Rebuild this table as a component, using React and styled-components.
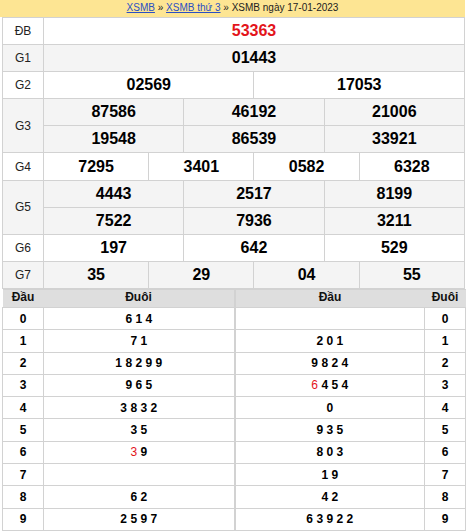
import React from "react"
import styled, { createGlobalStyle } from "styled-components"

const prizes = [
  { label: "ĐB", nums: ["53363"], special: true },
  { label: "G1", nums: ["01443"] },
  { label: "G2", nums: ["02569", "17053"] },
  { label: "G3", nums: ["87586", "46192", "21006", "19548", "86539", "33921"], perRow: 3 },
  { label: "G4", nums: ["7295", "3401", "0582", "6328"] },
  { label: "G5", nums: ["4443", "2517", "8199", "7522", "7936", "3211"], perRow: 3 },
  { label: "G6", nums: ["197", "642", "529"] },
  { label: "G7", nums: ["35", "29", "04", "55"] },
]

// each digit list may mark one entry as red with a leading "*"
const loto = [
  { head: ["6", "1", "4"], tail: [] },
  { head: ["7", "1"], tail: ["2", "0", "1"] },
  { head: ["1", "8", "2", "9", "9"], tail: ["9", "8", "2", "4"] },
  { head: ["9", "6", "5"], tail: ["*6", "4", "5", "4"] },
  { head: ["3", "8", "3", "2"], tail: ["0"] },
  { head: ["3", "5"], tail: ["9", "3", "5"] },
  { head: ["*3", "9"], tail: ["8", "0", "3"] },
  { head: [], tail: ["1", "9"] },
  { head: ["6", "2"], tail: ["4", "2"] },
  { head: ["2", "5", "9", "7"], tail: ["6", "3", "9", "2", "2"] },
]

const GlobalStyle = createGlobalStyle`
  body {
    margin: 0;
    background: #fff;
    font-family: "Liberation Sans", Arial, sans-serif;
  }
`

const Wrapper = styled.div`
  width: 465px;
`

const Breadcrumb = styled.div`
  height: 17px;
  line-height: 16px;
  background: #fde593;
  text-align: center;
  font-size: 10px;
  color: #222;
  a {
    color: #2a4fc4;
    text-decoration: underline;
  }
`

const Table = styled.table`
  margin-left: 2px;
  width: 463px;
  border-collapse: collapse;
  table-layout: fixed;
  td, th {
    border: 1px solid #d2d2d2;
    padding: 0;
    text-align: center;
  }
`

const PrizeRow = styled.tr`
  background: ${(p) => (p.$odd ? "#f4f4f4" : "#fff")};
`

const Label = styled.td`
  height: 26.1px;
  font-size: 12px;
  color: #222;
`

const Num = styled.td`
  height: 26.1px;
  font-size: 16px;
  font-weight: bold;
  color: ${(p) => (p.$special ? "#e3141b" : "#000")};
`

const LotoHead = styled.tr`
  background: #dedede;
  th {
    height: 17px;
    font-size: 12px;
    font-weight: bold;
    color: #111;
    vertical-align: top;
    line-height: 15px;
    border-left: none;
    border-right: none;
  }
  th.mid {
    border-left: 2px solid #d2d2d2;
  }
`

const LotoRow = styled.tr`
  td {
    height: 21.3px;
    font-size: 12px;
    font-weight: bold;
    color: #000;
  }
  td.mid {
    border-left: 2px solid #d2d2d2;
  }
`

const Red = styled.span`
  color: #e3141b;
  font-weight: normal;
`

const Digits = ({ list }) =>
  list.map((d, i) => (
    <React.Fragment key={i}>
      {i > 0 && " "}
      {d.startsWith("*") ? <Red>{d.slice(1)}</Red> : d}
    </React.Fragment>
  ))

const Prize = ({ prize, odd }) => {
  const perRow = prize.perRow || prize.nums.length
  const rows = []
  for (let i = 0; i < prize.nums.length; i += perRow) {
    rows.push(prize.nums.slice(i, i + perRow))
  }
  return rows.map((row, r) => (
    <PrizeRow $odd={odd} key={r}>
      {r === 0 && <Label rowSpan={rows.length}>{prize.label}</Label>}
      {row.map((n) => (
        <Num key={n} colSpan={12 / perRow} $special={prize.special}>
          {n}
        </Num>
      ))}
    </PrizeRow>
  ))
}

export default function App() {
  return (
    <Wrapper>
      <GlobalStyle />
      <Breadcrumb>
        <a href="#">XSMB</a> » <a href="#">XSMB thứ 3</a> » XSMB ngày 17-01-2023
      </Breadcrumb>
      <Table>
        <colgroup>
          <col style={{ width: 41 }} />
          {Array.from({ length: 12 }).map((_, i) => (
            <col key={i} />
          ))}
        </colgroup>
        <tbody>
          {prizes.map((p, i) => (
            <Prize prize={p} odd={i % 2 === 1} key={p.label} />
          ))}
        </tbody>
      </Table>
      <Table>
        <colgroup>
          <col style={{ width: 41 }} />
          <col style={{ width: 191 }} />
          <col style={{ width: 190 }} />
          <col style={{ width: 41 }} />
        </colgroup>
        <tbody>
          <LotoHead>
            <th>Đầu</th>
            <th>Đuôi</th>
            <th className="mid">Đầu</th>
            <th>Đuôi</th>
          </LotoHead>
          {loto.map((row, i) => (
            <LotoRow key={i}>
              <td>{i}</td>
              <td>
                <Digits list={row.head} />
              </td>
              <td className="mid">
                <Digits list={row.tail} />
              </td>
              <td>{i}</td>
            </LotoRow>
          ))}
        </tbody>
      </Table>
    </Wrapper>
  )
}
